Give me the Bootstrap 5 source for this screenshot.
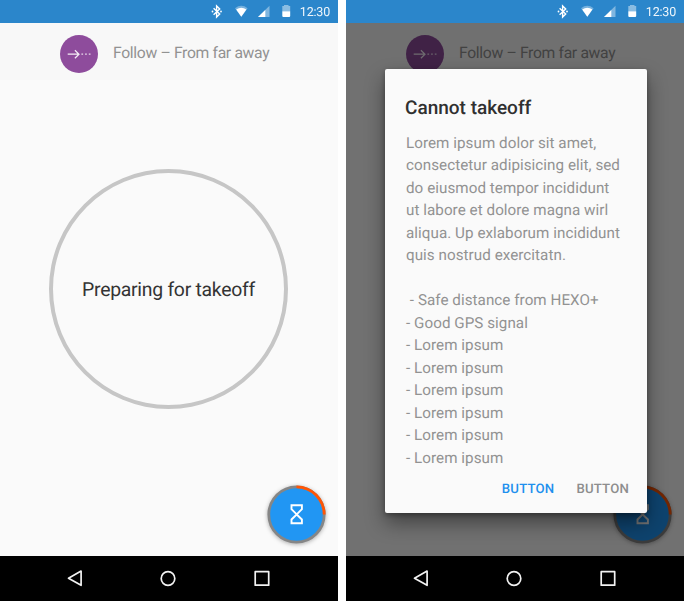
<!DOCTYPE html>
<html lang="en">
<head>
<meta charset="utf-8">
<meta name="viewport" content="width=device-width, initial-scale=1">
<title>Takeoff</title>
<link rel="stylesheet" href="https://cdn.jsdelivr.net/npm/bootstrap@5.3.0/dist/css/bootstrap.min.css">
<style>
body{font-family:Roboto,"Liberation Sans",sans-serif;background:#fff;width:684px;height:601px;overflow:hidden;text-rendering:geometricPrecision}
.screens{gap:8px}
.phone{width:338px;height:601px;background:#fafafa}
.status{height:23px;background:#2b86cb;color:#fff;padding-right:8px}
.clock{font-size:12.5px;line-height:16px;letter-spacing:-.2px;margin-left:7px;padding-top:5px;opacity:.92}
.mode{height:57px;background:#f8f8f8;padding:12px 0 0 60px}
.mode-label{font-size:15.7px;line-height:22px;color:#929292;margin-left:15px;padding-top:7px;letter-spacing:-.33px;white-space:nowrap}
.stage{padding:89px 0 0 49px}
.dial{width:239px;height:240px;border:4px solid #c6c6c6;font-size:19.4px;color:#333;white-space:nowrap;letter-spacing:-.27px;padding-top:2px}
.fab{right:12px;bottom:57px;width:59px;height:59px;filter:drop-shadow(0 1px 2px rgba(0,0,0,.3))}
.keys{height:45px;background:#000}
.scrim{top:23px;left:0;right:0;bottom:45px;background:rgba(0,0,0,.55)}
.dialog-box{left:39px;top:69px;width:262px;height:444px;background:#fafafa;border-radius:2px;padding:27px 18px 0 20px;box-shadow:0 10px 20px rgba(0,0,0,.42),0 2px 5px rgba(0,0,0,.3)}
.dialog-title{font-size:19px;line-height:24px;font-weight:500;color:#303030;letter-spacing:0}
.copy{font-size:15.2px;line-height:22.5px;color:#929292;letter-spacing:.05px;padding-left:1px;margin-top:11.5px;white-space:pre}
.action{font-size:13.2px;line-height:18px;font-weight:500;color:#8d8d8d;letter-spacing:.2px}
.action-main{color:#1e90ee}
.actions{margin-top:11.5px;gap:22px}
</style>
<script src="https://cdn.jsdelivr.net/npm/bootstrap@5.3.0/dist/js/bootstrap.bundle.min.js"></script>
</head>
<body>
<svg class="d-none">
  <symbol id="signals" viewBox="0 0 82 23">
    <path d="M2.6 8.2 8.7 14 5.6 17V6L8.7 9 2.6 14.8" fill="none" stroke="#fff" stroke-width="1.4"/>
    <circle cx="1.5" cy="11.5" r=".9" fill="#fff"/><circle cx="10" cy="11.5" r=".9" fill="#fff"/>
    <path d="M24 8.3Q30.3 3.4 36.6 8.3L30.3 16.7Z" fill="#fff" opacity=".35"/>
    <path d="M25.2 9.4Q30.3 6.3 35.4 9.4L30.3 16.7Z" fill="#fff"/>
    <path d="M47 17 58.5 5.8V17Z" fill="#fff" opacity=".4"/>
    <path d="M47 17 54.3 10V17Z" fill="#fff"/>
    <path d="M71.3 6H73V5H77.5V6H79.2V11.3H71.3Z" fill="#fff" opacity=".45"/>
    <path d="M71.3 11.3H79.2V16Q79.2 17 78.2 17H72.3Q71.3 17 71.3 16Z" fill="#fff"/>
  </symbol>
  <symbol id="follow" viewBox="0 0 38 38">
    <circle cx="19" cy="19" r="19" fill="#8e4c9c"/>
    <path d="M7.7 19.2H19M14.9 15.2 19 19.2 14.9 23.2" fill="none" stroke="#fff" stroke-opacity=".9" stroke-width="1.2"/>
    <path d="M21.4 19.2h1.7m2 0h1.7m2 0h1.7" stroke="#fff" stroke-opacity=".8" stroke-width="1.2"/>
  </symbol>
  <symbol id="wait" viewBox="0 0 59 59">
    <circle cx="29.5" cy="29.5" r="27.7" fill="#2196f3" stroke="#868686" stroke-width="2.8"/>
    <path d="M29.5 1.8A27.7 27.7 0 0 1 57.2 29.5" fill="none" stroke="#ff5505" stroke-width="2.8"/>
    <path d="M24.5 20.3H34.9V24.2L29.7 29.4 34.9 34.5V38.2H24.5V34.5L29.7 29.4 24.5 24.2Z" fill="none" stroke="#fff" stroke-width="1.9"/>
  </symbol>
  <symbol id="nav-keys" viewBox="0 0 338 45">
    <g fill="none" stroke="#f2f2f2" stroke-width="1.7" stroke-linejoin="round">
      <path d="M81.1 15.1V29.3L68.5 22.2Z"/><circle cx="168" cy="22.5" r="6.8"/><rect x="255.2" y="15.7" width="13.5" height="13.5"/>
    </g>
  </symbol>
</svg>
<main class="screens d-flex">
  <section class="phone position-relative d-flex flex-column">
    <header class="status d-flex justify-content-end">
      <svg width="82" height="23"><use href="#signals"/></svg><span class="clock">12:30</span>
    </header>
    <div class="mode d-flex align-items-start">
      <svg width="38" height="38"><use href="#follow"/></svg><span class="mode-label">Follow – From far away</span>
    </div>
    <div class="stage flex-grow-1">
      <div class="dial rounded-circle d-flex align-items-center justify-content-center">Preparing for takeoff</div>
    </div>
    <svg class="fab position-absolute"><use href="#wait"/></svg>
    <footer class="keys"><svg class="d-block" width="338" height="45"><use href="#nav-keys"/></svg></footer>
  </section>
  <section class="phone position-relative d-flex flex-column">
    <header class="status d-flex justify-content-end">
      <svg width="82" height="23"><use href="#signals"/></svg><span class="clock">12:30</span>
    </header>
    <div class="mode d-flex align-items-start">
      <svg width="38" height="38"><use href="#follow"/></svg><span class="mode-label">Follow – From far away</span>
    </div>
    <div class="flex-grow-1"></div>
    <svg class="fab position-absolute"><use href="#wait"/></svg>
    <footer class="keys"><svg class="d-block" width="338" height="45"><use href="#nav-keys"/></svg></footer>
    <div class="scrim position-absolute"></div>
    <div class="dialog-box position-absolute" role="dialog">
      <h1 class="dialog-title mb-0">Cannot takeoff</h1>
      <div class="copy">Lorem ipsum dolor sit amet,
consectetur adipisicing elit, sed
do eiusmod tempor incididunt
ut labore et dolore magna wirl
aliqua. Up exlaborum incididunt
quis nostrud exercitatn.

 - Safe distance from HEXO+
- Good GPS signal
- Lorem ipsum
- Lorem ipsum
- Lorem ipsum
- Lorem ipsum
- Lorem ipsum
- Lorem ipsum</div>
      <div class="actions d-flex justify-content-end">
        <a class="action action-main text-decoration-none">BUTTON</a>
        <a class="action text-decoration-none">BUTTON</a>
      </div>
    </div>
  </section>
</main>
</body>
</html>
